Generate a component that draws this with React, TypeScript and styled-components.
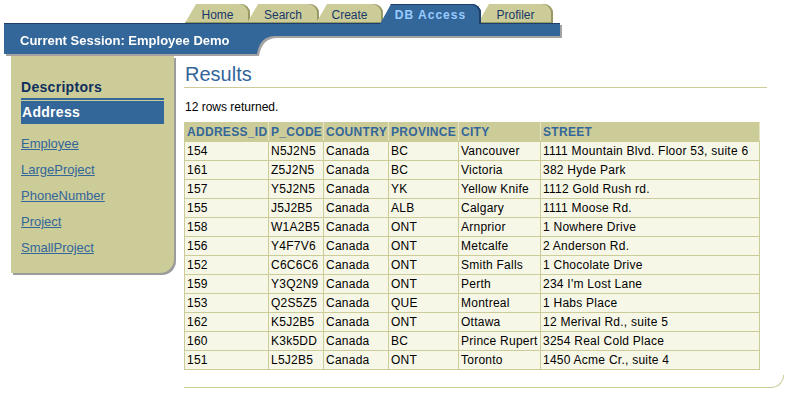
import styled, { createGlobalStyle, css } from 'styled-components';

const GlobalStyle = createGlobalStyle`
  html, body {
    margin: 0;
    padding: 0;
    background: #ffffff;
  }
  body {
    font-family: 'Liberation Sans', Arial, sans-serif;
    color: #000000;
  }
`;

type Address = {
  id: string;
  code: string;
  country: string;
  province: string;
  city: string;
  street: string;
};

const addresses: Address[] = [
  { id: '154', code: 'N5J2N5', country: 'Canada', province: 'BC', city: 'Vancouver', street: '1111 Mountain Blvd. Floor 53, suite 6' },
  { id: '161', code: 'Z5J2N5', country: 'Canada', province: 'BC', city: 'Victoria', street: '382 Hyde Park' },
  { id: '157', code: 'Y5J2N5', country: 'Canada', province: 'YK', city: 'Yellow Knife', street: '1112 Gold Rush rd.' },
  { id: '155', code: 'J5J2B5', country: 'Canada', province: 'ALB', city: 'Calgary', street: '1111 Moose Rd.' },
  { id: '158', code: 'W1A2B5', country: 'Canada', province: 'ONT', city: 'Arnprior', street: '1 Nowhere Drive' },
  { id: '156', code: 'Y4F7V6', country: 'Canada', province: 'ONT', city: 'Metcalfe', street: '2 Anderson Rd.' },
  { id: '152', code: 'C6C6C6', country: 'Canada', province: 'ONT', city: 'Smith Falls', street: '1 Chocolate Drive' },
  { id: '159', code: 'Y3Q2N9', country: 'Canada', province: 'ONT', city: 'Perth', street: "234 I'm Lost Lane" },
  { id: '153', code: 'Q2S5Z5', country: 'Canada', province: 'QUE', city: 'Montreal', street: '1 Habs Place' },
  { id: '162', code: 'K5J2B5', country: 'Canada', province: 'ONT', city: 'Ottawa', street: '12 Merival Rd., suite 5' },
  { id: '160', code: 'K3k5DD', country: 'Canada', province: 'BC', city: 'Prince Rupert', street: '3254 Real Cold Place' },
  { id: '151', code: 'L5J2B5', country: 'Canada', province: 'ONT', city: 'Toronto', street: '1450 Acme Cr., suite 4' },
];

const tabs = [
  { label: 'Home', width: 65 },
  { label: 'Search', width: 72 },
  { label: 'Create', width: 67 },
  { label: 'DB Access', width: 101, active: true },
  { label: 'Profiler', width: 75 },
];

const columns = [
  { label: 'ADDRESS_ID', width: 84 },
  { label: 'P_CODE', width: 55 },
  { label: 'COUNTRY', width: 65 },
  { label: 'PROVINCE', width: 70 },
  { label: 'CITY', width: 82 },
  { label: 'STREET', width: 219 },
];

const descriptors = ['Employee', 'LargeProject', 'PhoneNumber', 'Project', 'SmallProject'];

const App = (): JSX.Element => {
  return (
    <Page>
      <GlobalStyle />
      <Header>
        <TabRow>
          {tabs.map((tab) => (
            <Tab key={tab.label} $active={!!tab.active} $width={tab.width}>
              {tab.label}
            </Tab>
          ))}
        </TabRow>
        <BarShadow>
          <SessionBar>Current Session: Employee Demo</SessionBar>
        </BarShadow>
      </Header>

      <Body>
        <Sidebar>
          <SidebarTitle>Descriptors</SidebarTitle>
          <ActiveItem>Address</ActiveItem>
          <LinkList>
            {descriptors.map((name) => (
              <DescriptorLink key={name} href='#'>
                {name}
              </DescriptorLink>
            ))}
          </LinkList>
        </Sidebar>

        <Main>
          <Title>Results</Title>
          <RowCount>12 rows returned.</RowCount>
          <ResultTable>
            <colgroup>
              {columns.map((col) => (
                <col key={col.label} style={{ width: col.width }} />
              ))}
            </colgroup>
            <thead>
              <tr>
                {columns.map((col) => (
                  <HeadCell key={col.label}>{col.label}</HeadCell>
                ))}
              </tr>
            </thead>
            <tbody>
              {addresses.map((a) => (
                <tr key={a.id}>
                  <Cell>{a.id}</Cell>
                  <Cell>{a.code}</Cell>
                  <Cell>{a.country}</Cell>
                  <Cell>{a.province}</Cell>
                  <Cell>{a.city}</Cell>
                  <Cell>{a.street}</Cell>
                </tr>
              ))}
            </tbody>
          </ResultTable>
          <FooterEdge />
        </Main>
      </Body>
    </Page>
  );
};

const Page = styled.div`
  width: 796px;
  height: 398px;
  overflow: hidden;
`;

const Header = styled.header`
  display: flex;
  flex-direction: column;
  padding: 4px 0 0 4px;
`;

const TabRow = styled.nav`
  display: flex;
  align-items: flex-end;
  height: 19px;
  margin-left: 181px;
`;

const Tab = styled.div<{ $active: boolean; $width: number }>`
  width: ${({ $width }) => $width}px;
  height: 19px;
  box-sizing: border-box;
  padding-top: 4px;
  font-size: 12px;
  line-height: 14px;
  text-align: center;
  white-space: nowrap;
  background: #cccc99;
  color: #1a3768;
  border-top-right-radius: 9px;
  clip-path: polygon(11px 0, 100% 0, 100% 100%, 0 100%);
  box-shadow: inset -2px 0 0 #999966, inset 0 -1px 0 #999966;

  & + & {
    margin-left: -3px;
  }

  ${({ $active }) =>
    $active &&
    css`
      position: relative;
      z-index: 1;
      height: 20px;
      margin-bottom: -1px;
      padding-top: 4px;
      background: #336699;
      color: #99ccff;
      font-weight: bold;
      letter-spacing: 1px;
      box-shadow: inset -2px 0 0 #1f3f6b, inset 0 1px 0 #1f3f6b;
    `}
`;

const BarShadow = styled.div`
  width: fit-content;
  filter: drop-shadow(2px 2px 0 #a3a3a3);
`;

const SessionBar = styled.div`
  width: 556px;
  height: 31px;
  box-sizing: border-box;
  padding: 10px 0 0 16px;
  background: #336699;
  box-shadow: inset 0 1px 0 #1f3f6b;
  clip-path: path('M0 0 H556 V13 H271 Q256 13 253 31 H0 Z');
  color: #ffffff;
  font-size: 13px;
  font-weight: bold;
  line-height: 16px;
  white-space: nowrap;
`;

const Body = styled.div`
  display: flex;
  align-items: flex-start;
  gap: 10px;
  padding-left: 11px;
`;

const Sidebar = styled.aside`
  width: 163px;
  box-sizing: border-box;
  margin-top: 2px;
  padding: 22px 10px 17px;
  background: #cccc99;
  border-bottom-right-radius: 14px;
  box-shadow: 2px 2px 0 #9c9c9c;
`;

const SidebarTitle = styled.div`
  padding-bottom: 2px;
  border-bottom: 2px solid #336699;
  color: #0f2f5f;
  font-size: 14px;
  font-weight: bold;
  line-height: 18px;
  letter-spacing: 0.3px;
`;

const ActiveItem = styled.div`
  margin-top: 1px;
  height: 23px;
  padding-left: 1px;
  background: #336699;
  color: #ffffff;
  font-size: 14px;
  font-weight: bold;
  line-height: 23px;
  letter-spacing: 0.3px;
`;

const LinkList = styled.div`
  display: flex;
  flex-direction: column;
  align-items: flex-start;
  gap: 10px;
  margin-top: 12px;
`;

const DescriptorLink = styled.a`
  color: #336699;
  font-size: 13px;
  line-height: 16px;
  text-decoration: underline;
`;

const Main = styled.main`
  display: flex;
  flex-direction: column;
  width: 600px;
  padding-top: 8px;
`;

const Title = styled.h1`
  width: 582px;
  margin: 0;
  padding: 0 0 1px 1px;
  border-bottom: 1px solid #cccc99;
  color: #336699;
  font-size: 20px;
  font-weight: normal;
  line-height: 24px;
`;

const RowCount = styled.div`
  margin-top: 12px;
  padding-left: 1px;
  font-size: 12px;
  line-height: 14px;
`;

const ResultTable = styled.table`
  width: 575px;
  margin-top: 8px;
  table-layout: fixed;
  border-collapse: collapse;
`;

const HeadCell = styled.th`
  padding: 1px 0 1px 2px;
  background: #cccc99;
  border: 1px solid #cccc99;
  border-right-color: #e4e4c4;
  color: #336699;
  font-size: 12px;
  font-weight: bold;
  line-height: 16px;
  letter-spacing: 0.3px;
  text-align: left;
  white-space: nowrap;
  overflow: hidden;
`;

const Cell = styled.td`
  padding: 1px 1px 1px 2px;
  background: #f7f7e7;
  border: 1px solid #cccc99;
  font-size: 12px;
  line-height: 16px;
  letter-spacing: 0.25px;
  white-space: nowrap;
  overflow: hidden;
`;

const FooterEdge = styled.div`
  width: 600px;
  height: 13px;
  box-sizing: border-box;
  margin-top: 5px;
  border-right: 1px solid #cccc99;
  border-bottom: 1px solid #cccc99;
  border-bottom-right-radius: 13px;
`;

export default App;
